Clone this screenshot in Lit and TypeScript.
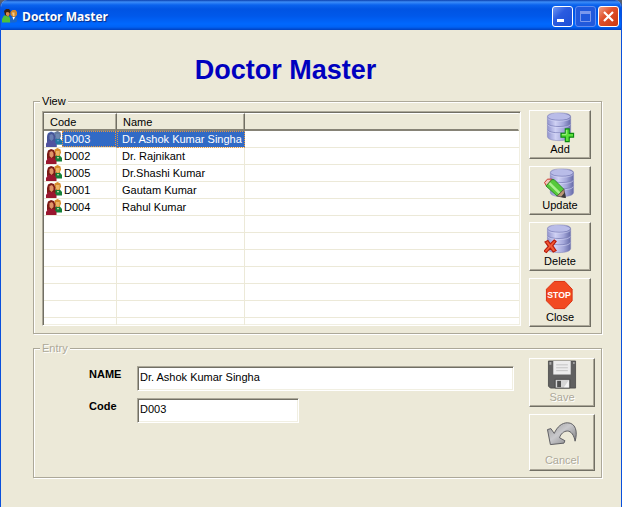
import { LitElement, html, css, svg, nothing } from "lit";
import { customElement } from "lit/decorators.js";
import { classMap } from "lit/directives/class-map.js";

interface Doctor {
  code: string;
  name: string;
}

const doctors: Doctor[] = [
  { code: "D003", name: "Dr. Ashok Kumar Singha" },
  { code: "D002", name: "Dr. Rajnikant" },
  { code: "D005", name: "Dr.Shashi Kumar" },
  { code: "D001", name: "Gautam Kumar" },
  { code: "D004", name: "Rahul Kumar" },
];
const emptyRows = Array.from({ length: 7 });

const cylinder = (x: number) => svg`
  <g transform="translate(${x} 1)">
    <path d="M0 4C0 1 5 0 12 0s12 1 12 4v20c0 3-5 4.500-12 4.500S0 27 0 24z" fill="url(#metal)" stroke="#8588bd" stroke-width=".6"/>
    <ellipse cx="12" cy="4" rx="11.500" ry="3.500" fill="#b9bce8"/>
    <path d="M.3 4.500C2 8.500 22 8.500 23.700 4.500M.3 11C2 15 22 15 23.700 11M.3 17.500C2 21.500 22 21.500 23.700 17.500" fill="none" stroke="#7b7fb8" stroke-width=".8"/>
    <path d="M.3 5.500C2 9.500 22 9.500 23.700 5.500M.3 12C2 16 22 16 23.700 12M.3 18.500C2 22.500 22 22.500 23.700 18.500" fill="none" stroke="#d5d7f6" stroke-width=".6"/>
  </g>`;

const metal = svg`<defs><linearGradient id="metal">
  <stop offset="0" stop-color="#9295ce"/><stop offset=".35" stop-color="#cfd1f4"/>
  <stop offset=".7" stop-color="#a3a6d9"/><stop offset="1" stop-color="#666ba8"/>
</linearGradient></defs>`;

const addIcon = html`<svg class="icon" viewBox="0 0 32 32" aria-hidden="true">${metal}${cylinder(3)}
  <path d="M21.500 17.500h4v4.500H30v4h-4.500v4.500h-4V26H17v-4h4.500z" fill="#5be03a" stroke="#0c8a12" stroke-width="1.200"/>
  <path d="M22.500 18.500v4.500H18" fill="none" stroke="#baf7a4" stroke-width=".8"/></svg>`;

const updateIcon = html`<svg class="icon" viewBox="0 0 32 32" aria-hidden="true">${cylinder(6)}
  <path d="M0 15L3 11.500h5l-6 7z" fill="#f4c4ba" stroke="#c8342a"/>
  <path d="M1.500 18.500L7.500 12h2.500l10 10-7 7z" fill="#55c93a" stroke="#23831c" stroke-width=".9"/>
  <path d="M5 15.500l10.500 10.500" stroke="#a9f08d" stroke-width="2.600"/>
  <path d="M13 29l7-7 1.500 8.500z" fill="#bb9577" stroke="#594a40" stroke-width=".8"/>
  <path d="M17 30l4-5 1 6z" fill="#39393c"/></svg>`;

const deleteIcon = html`<svg class="icon" viewBox="0 0 32 32" aria-hidden="true">${cylinder(3)}
  <path d="M.5 18.500l3-1.500 2.500 3.500 4-4 2 1.500-3.500 4.500 3.500 5-3 1.500-3-4-4 4.500-2.500-1.500 4.500-5z" fill="#f35a36" stroke="#b91d0d" stroke-width="1.200"/></svg>`;

const stopIcon = html`<svg class="icon" viewBox="0 0 32 32" aria-hidden="true">
  <path d="M10 1.500h11l7.500 8v12l-7.500 8H10l-8-8v-12z" fill="#f24a22" stroke="#d9300f"/>
  <text class="stop" x="15" y="19" text-anchor="middle">STOP</text></svg>`;

const saveIcon = html`<svg class="icon" viewBox="0 0 32 32" aria-hidden="true">
  <path d="M2 1h28v28H4l-2-2z" fill="#606060" stroke="#444" stroke-width=".8"/>
  <path d="M7 1h18v14H7z" fill="#ececec"/>
  <path d="M10 5h12M10 8h12M10 11h12" stroke="#c2c2c2"/>
  <path d="M3 2h2v3H3zM27.500 2h1.500v2h-1.500z" fill="#aaa"/>
  <path d="M9 20h15v9H9z" fill="#d6d6d6" stroke="#333" stroke-width=".7"/>
  <path d="M11 21.500h4V28h-4z" fill="#505050"/>
  <path d="M18 28l5-7v7z" fill="#f5f5f5"/></svg>`;

const undoIcon = html`<svg class="icon" viewBox="0 0 32 32" aria-hidden="true">
  <defs><linearGradient id="steel" x2="1" y2="1"><stop offset="0" stop-color="#999"/><stop offset=".45" stop-color="#c9c9cc"/><stop offset="1" stop-color="#77777a"/></linearGradient></defs>
  <path d="M1 14l3.500-1 3.500 5C11 11 16 7 21.500 7 30 7 32.500 16 29.500 26c-1-6-4-10.500-8-10.500-3.500 0-7 3-8 7l5.500 3-1 2.500L4 29.500z" fill="url(#steel)" stroke="#5c5c60" stroke-width="1"/></svg>`;

const peopleIcon = (selected: boolean) => html`<svg class="people" viewBox="0 0 16 16" aria-hidden="true">
  <path d="M8 10l2-3h3.500l2.500 3v3.500H8z" fill="#15803a"/>
  <path d="M8.500 1.500l3-1.500 3 1.500.5 3-1.500 3.500h-3L8.500 5z" fill="#d78c2c"/>
  <path d="M10 3h3.500v3.500L12 8l-2-1.500z" fill="#ecb466"/>
  <path d="M11 9l1 2 1-2z" fill="#efe8c0"/>
  <path d="M1 6l1-3.500L5 1l3 1 1.500 4v5H1z" fill="#7c1b16"/>
  <path d="M3.500 4L6 3l1.500 2v3L5.500 10 3.500 8z" fill="#e09468"/>
  <path d="M0 13l2-3h6l2.500 3v3H0z" fill="#99172f"/>
  ${selected
    ? svg`<path d="M1 5l1-3 3-1.500 3 1L11.500 0l3 1.500.5 4-1 2 2 2.500v3.500h-5V16H0v-3l1-2z" fill="#2a72dc" fill-opacity=".65"/>`
    : nothing}
</svg>`;

const appIcon = html`<svg class="app-icon" viewBox="0 0 16 16" aria-hidden="true">
  <path d="M0 11l2-3.500h4.500L8.500 11v3.500H0z" fill="#4dc13b"/>
  <path d="M2 3l2-2h3l1.500 2-.5 4-2 1.500L3 7z" fill="#3a2110"/>
  <path d="M4 4.500l2-.5 1.500 1v2L6 8.500 4 7z" fill="#d98b4a"/>
  <path d="M8 11l1.500-2.500h4L15 10v3.500l-2 1H8z" fill="#1c67c8"/>
  <path d="M8.500 4l2-2h3L15 4v3l-2 2h-2L8.500 7z" fill="#d0882c"/>
  <path d="M10 4.500h2.500V8H11z" fill="#f6ca8c"/>
  <path d="M10.500 9l1 3 1.500-3z" fill="#fff"/></svg>`;

@customElement("app-root")
export class AppRoot extends LitElement {
  static styles = css`
    :host {
      display: block;
      box-sizing: border-box;
      min-height: 100vh;
      background: #5a5f6b;
      font: 11px/12px "Liberation Sans", Arial, sans-serif;
      color: #000;
    }
    * { box-sizing: border-box; }
    .window {
      display: flex;
      flex-direction: column;
      min-height: 100vh;
      border: solid #0a50dc;
      border-width: 0 1px;
      border-radius: 7px 7px 0 0;
      background: #ece9d8;
      overflow: hidden;
    }
    .titlebar {
      display: flex;
      align-items: center;
      gap: 2px;
      height: 30px;
      padding: 2px 2px 0 1px;
      background: linear-gradient(#0a3fae 0, #3c8cf8 2px, #0a63ee 5px, #0054e3 9px, #0058ea 16px, #0068fe 24px, #0062f5 27px, #0040bf 30px);
    }
    .app-icon { width: 16px; height: 16px; }
    .caption {
      flex: 1;
      margin: 0 2px;
      padding-top: 2px;
      font: bold 12px/18px "Open Sans", "Noto Sans", sans-serif;
      color: #fff;
      text-shadow: 1px 1px 1px #0a2a80;
    }
    .sys {
      width: 21px;
      height: 21px;
      padding: 0;
      border: 1px solid #fff;
      border-radius: 3px;
      background: linear-gradient(135deg, #6f96f2, #2a5be0 40%, #1d4fd6);
    }
    .sys svg { display: block; width: 19px; height: 19px; }
    .sys.max { border-color: #5f8cf0; background: #2159dc; }
    .sys.close { background: linear-gradient(135deg, #f0a088, #e0512c 40%, #c8380f); }
    .controls { display: flex; gap: 2px; }
    main { flex: 1; padding: 22px 19px 0 32px; }
    h1 {
      margin: 0;
      padding-right: 64px;
      font-size: 27px;
      line-height: 36px;
      text-align: center;
      color: #0000bf;
    }
    .group {
      position: relative;
      display: grid;
      grid-template-columns: 1fr auto;
      column-gap: 8px;
      min-width: 0;
      margin: 13px 0 0;
      padding: 8px 10px 6px 8px;
      border: 1px solid #aca899;
      box-shadow: inset 1px 1px #fff, 1px 1px #fff;
    }
    .group > h2 {
      position: absolute;
      top: -7px;
      left: 6px;
      margin: 0;
      padding: 0 2px;
      background: #ece9d8;
      font: inherit;
    }
    .list {
      contain: size;
      margin: 1px 0 1px;
      overflow: hidden;
      background: #fff;
      border: 1px solid;
      border-color: #aca899 #fff #fff #aca899;
      box-shadow: inset 1px 1px #716f64, inset -1px -1px #f1efe2;
      padding: 1px;
    }
    table { width: 100%; table-layout: fixed; border-collapse: separate; border-spacing: 0; }
    .col-code { width: 73px; }
    .col-name { width: 128px; }
    th {
      height: 18px;
      padding: 0 6px;
      background: #ece9d8;
      border: solid;
      border-width: 1px 1px 2px 0;
      border-color: #fff #716f64 #868376 #fff;
      box-shadow: inset -1px 0 #aca899;
      text-align: left;
      font-weight: normal;
    }
    th:last-child { border-right-color: #ece9d8; box-shadow: none; }
    td {
      height: 17px;
      padding: 0 5px;
      border: solid #ece9d8;
      border-width: 0 1px 1px 0;
      white-space: nowrap;
    }
    td:last-child { border-right: 0; }
    td.code { padding: 0 0 0 2px; }
    .entry { display: flex; align-items: stretch; height: 16px; line-height: 16px; }
    .entry span { flex: 1; padding-left: 2px; }
    .people { width: 16px; height: 16px; }
    .selected .entry span, .selected td.name { background: #316ac5; color: #fff; }
    .selected td.code { border-right-color: #316ac5; }
    .selected .entry span { outline: 1px dotted #e8963c; outline-offset: -1px; }
    .selected td.name { border-right-color: #316ac5; outline: 1px dotted #e8963c; outline-offset: -1px; }
    .actions { display: flex; flex-direction: column; gap: 7px; width: 62px; }
    .action {
      display: flex;
      flex-direction: column;
      align-items: center;
      justify-content: space-between;
      height: 49px;
      padding: 1px 0 3px;
      border: 1px solid;
      border-color: #fff #716f64 #716f64 #fff;
      box-shadow: inset -1px -1px #aca899;
      background: #ece9d8;
      font: inherit;
      color: #000;
    }
    .action.tall { height: 57px; padding-bottom: 4px; }
    .icon { display: block; width: 32px; height: 31px; }
    .stop { font: bold 9px "Liberation Sans", Arial, sans-serif; fill: #fff; }
    .action:disabled { color: #aca899; text-shadow: 1px 1px #fff; }
    .group.form { margin-top: 14px; padding: 9px 6px 6px 8px; }
    .form > h2 { color: #aca899; text-shadow: 1px 1px #fff; }
    .form .actions { width: 66px; }
    .fields {
      display: grid;
      grid-template-columns: 48px 1fr;
      align-content: start;
      gap: 7px 0;
      padding: 8px 7px 0 47px;
    }
    label { padding-top: 2px; font-weight: bold; }
    input {
      width: 100%;
      height: 25px;
      padding: 0 2px 4px;
      border: 1px solid;
      border-color: #aca899 #fff #fff #aca899;
      border-radius: 0;
      box-shadow: inset 1px 1px #716f64, inset -1px -1px #f1efe2;
      background: #fff;
      font: inherit;
      color: #000;
      outline: 0;
    }
    .short { width: 162px; }
  `;

  private row(d: Doctor, i: number) {
    return html`<tr class=${classMap({ selected: i === 0 })}>
      <td class="code"><div class="entry">${peopleIcon(i === 0)}<span>${d.code}</span></div></td>
      <td class="name">${d.name}</td>
      <td></td>
    </tr>`;
  }

  render() {
    return html`
      <div class="window">
        <header class="titlebar">
          ${appIcon}
          <div class="caption">Doctor Master</div>
          <div class="controls">
            <button class="sys" aria-label="Minimize"><svg viewBox="0 0 19 19"><path d="M4 12h7v3H4z" fill="#fff"/></svg></button>
            <button class="sys max" aria-label="Maximize" disabled><svg viewBox="0 0 19 19"><path d="M4.500 5v9.500h10V5" fill="none" stroke="#7b98ec"/><path d="M4 4h11v3H4z" fill="#7b98ec"/></svg></button>
            <button class="sys close" aria-label="Close window"><svg viewBox="0 0 19 19"><path d="M5 5l9 9M14 5l-9 9" stroke="#fff" stroke-width="2.200"/></svg></button>
          </div>
        </header>
        <main>
          <h1>Doctor Master</h1>
          <section class="group" aria-labelledby="view">
            <h2 id="view">View</h2>
            <div class="list">
              <table>
                <colgroup><col class="col-code" /><col class="col-name" /><col /></colgroup>
                <thead><tr><th>Code</th><th>Name</th><th></th></tr></thead>
                <tbody>
                  ${doctors.map((d, i) => this.row(d, i))}
                  ${emptyRows.map(() => html`<tr><td></td><td></td><td></td></tr>`)}
                </tbody>
              </table>
            </div>
            <div class="actions">
              <button class="action">${addIcon}Add</button>
              <button class="action">${updateIcon}Update</button>
              <button class="action">${deleteIcon}Delete</button>
              <button class="action">${stopIcon}Close</button>
            </div>
          </section>
          <section class="group form" aria-labelledby="entry">
            <h2 id="entry">Entry</h2>
            <div class="fields">
              <label for="name">NAME</label>
              <input id="name" type="text" readonly .value=${doctors[0].name} />
              <label for="code">Code</label>
              <input id="code" class="short" type="text" readonly .value=${doctors[0].code} />
            </div>
            <div class="actions">
              <button class="action" disabled>${saveIcon}Save</button>
              <button class="action tall" disabled>${undoIcon}Cancel</button>
            </div>
          </section>
        </main>
      </div>
    `;
  }
}
